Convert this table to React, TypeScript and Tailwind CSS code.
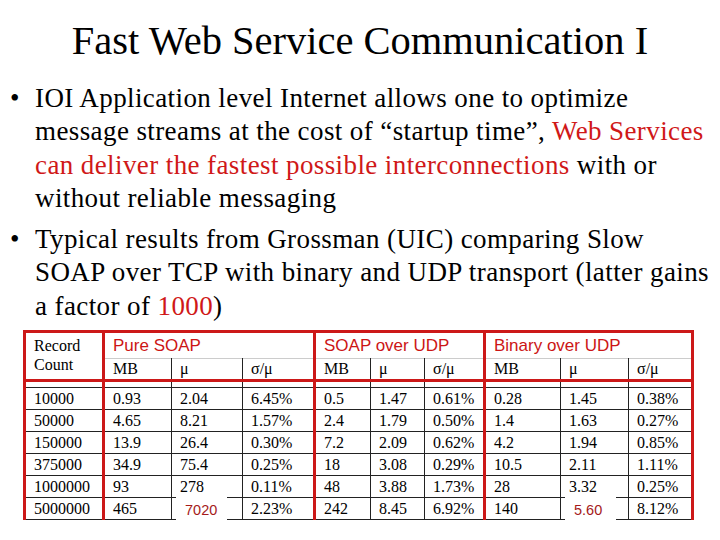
type Row = string[];

const rows: Row[] = [
  ["10000", "0.93", "2.04", "6.45%", "0.5", "1.47", "0.61%", "0.28", "1.45", "0.38%"],
  ["50000", "4.65", "8.21", "1.57%", "2.4", "1.79", "0.50%", "1.4", "1.63", "0.27%"],
  ["150000", "13.9", "26.4", "0.30%", "7.2", "2.09", "0.62%", "4.2", "1.94", "0.85%"],
  ["375000", "34.9", "75.4", "0.25%", "18", "3.08", "0.29%", "10.5", "2.11", "1.11%"],
  ["1000000", "93", "278", "0.11%", "48", "3.88", "1.73%", "28", "3.32", "0.25%"],
  ["5000000", "465", "", "2.23%", "242", "8.45", "6.92%", "140", "", "8.12%"],
];

const widths = [79, 68, 71, 72, 56, 54, 60, 76, 68, 64];
const groupEnd = [0, 3, 6, 9];

function cellBorder(i: number) {
  return groupEnd.includes(i) ? "border-r-[3px] border-r-[#cc1818]" : "border-r border-r-[#222]";
}

// white patch pasted over the cell, holding the red figure
function Patch({ text }: { text: string }) {
  return (
    <div className="absolute left-[4px] top-[-2px] w-[51px] h-[28px] bg-white flex items-center pl-[9px] text-[14.5px] text-[#a51a1a] font-['Liberation_Sans',sans-serif]">
      {text}
    </div>
  );
}

export default function App() {
  return (
    <div className="w-[720px] h-[540px] bg-white overflow-hidden text-black font-['Liberation_Serif',serif]">
      <h1 className="text-center text-[40.5px] leading-none pt-[21px]">Fast Web Service Communication I</h1>

      {/* Bullets */}
      <ul className="mt-[20px] text-[27px] tracking-[0.4px] leading-[33.5px] whitespace-nowrap">
        <li className="flex">
          <span className="w-[35px] shrink-0 pl-[10px]">•</span>
          <span>
            IOI Application level Internet allows one to optimize
            <br />
            message streams at the cost of “startup time”, <span className="text-[#d01818]">Web Services</span>
            <br />
            <span className="text-[#d01818]">can deliver the fastest possible interconnections</span> with or
            <br />
            without reliable messaging
          </span>
        </li>
        <li className="flex mt-[7px]">
          <span className="w-[35px] shrink-0 pl-[10px]">•</span>
          <span>
            Typical results from Grossman (UIC) comparing Slow
            <br />
            SOAP over TCP with binary and UDP transport (latter gains
            <br />
            a factor of <span className="text-[#d01818]">1000</span>)
          </span>
        </li>
      </ul>

      {/* Results table */}
      <table className="ml-[23px] mt-[7px] border-collapse table-fixed text-[16px] leading-none">
        <colgroup>
          {widths.map((w, i) => (
            <col key={i} style={{ width: w }} />
          ))}
        </colgroup>
        <tbody>
          <tr className="h-[27px] border-t-[3px] border-t-[#cc1818]">
            <td rowSpan={2} className="align-top pt-[3px] pl-[8px] leading-[19px] border-l-[3px] border-l-[#cc1818] border-r-[3px] border-r-[#cc1818]">
              Record Count
            </td>
            {["Pure SOAP", "SOAP over UDP", "Binary over UDP"].map((g) => (
              <td
                key={g}
                colSpan={3}
                className="pl-[8px] pt-[4px] align-top text-[17px] text-[#cc1515] font-['Liberation_Sans',sans-serif] border-r-[3px] border-r-[#cc1818]"
              >
                {g}
              </td>
            ))}
          </tr>
          <tr className="h-[22px] border-b-[3px] border-b-[#cc1818]">
            {["MB", "μ", "σ/μ", "MB", "μ", "σ/μ", "MB", "μ", "σ/μ"].map((h, i) => (
              <td key={i} className={`pl-[8px] border-t border-t-[#ccc] ${cellBorder(i + 1)}`}>
                {h}
              </td>
            ))}
          </tr>
          <tr className="h-[7px] border-b border-b-[#222]">
            {widths.map((_, i) => (
              <td key={i} className={`p-0 ${cellBorder(i)} ${i === 0 ? "border-l-[3px] border-l-[#cc1818]" : ""}`} />
            ))}
          </tr>
          {rows.map((r, ri) => (
            <tr key={ri} className={`h-[22px] ${ri === rows.length - 1 ? "" : "border-b border-b-[#222]"}`}>
              {r.map((c, ci) => {
                const patched = ri === rows.length - 1 && (ci === 2 || ci === 8);
                return (
                  <td
                    key={ci}
                    className={`pl-[8px] relative ${cellBorder(ci)} ${ci === 0 ? "border-l-[3px] border-l-[#cc1818]" : ""} ${
                      ri === rows.length - 1 ? "border-b border-b-[#222]" : ""
                    }`}
                  >
                    {c}
                    {patched && <Patch text={ci === 2 ? "7020" : "5.60"} />}
                  </td>
                );
              })}
            </tr>
          ))}
        </tbody>
      </table>
    </div>
  );
}
